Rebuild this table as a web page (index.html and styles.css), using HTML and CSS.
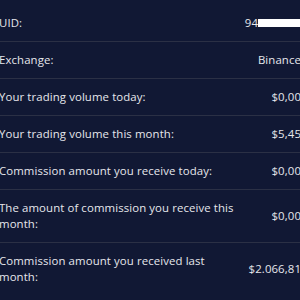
FILE: index.html
```
<!DOCTYPE html>
<html>
<head>
<meta charset="utf-8">
<link rel="stylesheet" href="styles.css">
</head>
<body>
<div class="panel">
  <div class="row">
    <div class="label">UID:</div>
    <div class="value">94<span class="redact"></span></div>
  </div>
  <div class="row">
    <div class="label">Exchange:</div>
    <div class="value">Binance</div>
  </div>
  <div class="row">
    <div class="label">Your trading volume today:</div>
    <div class="value">$0,00</div>
  </div>
  <div class="row">
    <div class="label">Your trading volume this month:</div>
    <div class="value">$5,45</div>
  </div>
  <div class="row">
    <div class="label">Commission amount you receive today:</div>
    <div class="value">$0,00</div>
  </div>
  <div class="row">
    <div class="label">The amount of commission you receive this month:</div>
    <div class="value">$0,00</div>
  </div>
  <div class="row last">
    <div class="label">Commission amount you received last month:</div>
    <div class="value">$2.066,81</div>
  </div>
</div>
</body>
</html>
```
FILE: styles.css
```
html, body {
  margin: 0;
  padding: 0;
  width: 300px;
  height: 300px;
  overflow: hidden;
  background: #111834;
}
.panel {
  padding-top: 5px;
  margin-left: -1px;
  width: 302px;
  font-family: "Open Sans", sans-serif;
  font-size: 11.4px;
  line-height: 16px;
  color: #e6e7ec;
  letter-spacing: 0.1px;
}
.row {
  display: flex;
  justify-content: space-between;
  align-items: center;
  padding: 10px 0;
  border-bottom: 1px solid #2b3045;
  gap: 12px;
}
.row.last {
  border-bottom: none;
}
.label {
  max-width: 239px;
}
.value {
  display: flex;
  align-items: center;
  white-space: nowrap;
}
.redact {
  display: inline-block;
  width: 43px;
  height: 8px;
  background: #ffffff;
}
```
